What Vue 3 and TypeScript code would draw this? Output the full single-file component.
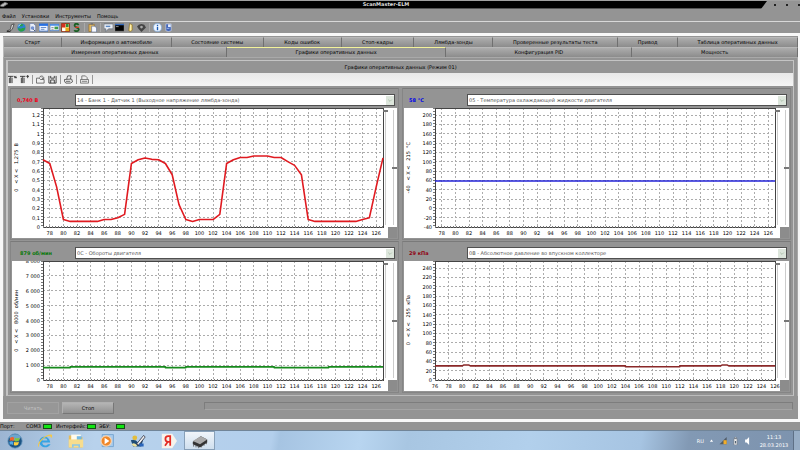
<script setup lang="ts">
import { ref } from 'vue'

interface Chart {
  id: string
  value: string
  tone: string
  pid: string
  range: string
  xMin: number
  xMax: number
  yMin: number
  yMax: number
  yTicks: number[]
  points: [number, number][]
  format: (v: number) => string
}

const ticks = (from: number, to: number, step: number): number[] => {
  const out: number[] = []
  for (let i = 0; from + i * step <= to + step / 1000; i++) out.push(from + i * step)
  return out
}

const plain = (v: number) => String(Math.round(v))

const charts: Chart[] = [
  {
    id: 'lambda', value: '0,740 В', tone: 'red', pid: '14 - Банк 1 - Датчик 1 (Выходное напряжение лямбда-зонда)',
    range: '0   < X <   1,275  В', xMin: 77, xMax: 127, yMin: 0, yMax: 1.275, yTicks: ticks(0, 1.2, 0.1),
    format: (v) => String(Math.round(v * 10) / 10).replace('.', ','),
    points: [
      [77, 0.72], [78, 0.68], [79, 0.43], [80, 0.08], [81, 0.06], [85, 0.06], [86, 0.08], [87, 0.08], [88, 0.1],
      [89, 0.135], [90, 0.68], [91, 0.72], [92, 0.74], [93, 0.725], [94, 0.72], [95, 0.68], [96, 0.56], [97, 0.24],
      [98, 0.08], [99, 0.06], [100, 0.08], [102, 0.08], [103, 0.135], [104, 0.68], [105, 0.72], [106, 0.745],
      [107, 0.745], [108, 0.76], [110, 0.76], [111, 0.745], [112, 0.745], [113, 0.7], [114, 0.66], [115, 0.56],
      [116, 0.08], [117, 0.06], [123, 0.06], [124, 0.08], [125, 0.1], [126, 0.43], [127, 0.74],
    ],
  },
  {
    id: 'coolant', value: '58 °C', tone: 'blue', pid: '05 - Температура охлаждающей жидкости двигателя',
    range: '-40   < X <   215  °C', xMin: 77, xMax: 127, yMin: -40, yMax: 215, yTicks: ticks(-40, 200, 20),
    format: plain, points: [[77, 58.5], [127, 58.5]],
  },
  {
    id: 'rpm', value: '879 об/мин', tone: 'green', pid: '0C - Обороты двигателя',
    range: '0   < X <   8000  об/мин', xMin: 77, xMax: 127, yMin: 0, yMax: 8000, yTicks: ticks(0, 8000, 1000),
    format: (v) => (v >= 1000 ? `${v / 1000} 000` : String(v)),
    points: [
      [77, 830], [81, 830], [81, 885], [95, 885], [95, 830], [98, 830], [98, 885], [111, 885], [111, 830],
      [119, 830], [119, 885], [127, 885],
    ],
  },
  {
    id: 'map', value: '29 кПа', tone: 'maroon', pid: '0B - Абсолютное давление во впускном коллекторе',
    range: '0   < X <   255  кПа', xMin: 76, xMax: 126, yMin: 0, yMax: 255, yTicks: ticks(0, 240, 20),
    format: plain,
    points: [
      [76, 30.3], [80, 30.3], [80.2, 32], [81, 32], [81.2, 30.3], [104, 30.3], [104, 28.5], [112, 28.5],
      [112, 30.3], [118, 30.3], [118.2, 32], [119, 32], [119.2, 30.3], [126, 30.3],
    ],
  },
]

const px = (c: Chart, v: number) => ((v - c.xMin) / (c.xMax - c.xMin)) * 100
const py = (c: Chart, v: number) => 100 - ((v - c.yMin) / (c.yMax - c.yMin)) * 100
const xTicks = (c: Chart) => ticks(c.xMin + (c.xMin % 2), 126, 2)
const line = (c: Chart) => c.points.map(([x, y]) => `${px(c, x)},${py(c, y)}`).join(' ')

const menus = ['Файл', 'Установки', 'Инструменты', 'Помощь']
const topTabs = [
  'Старт', 'Информация о автомобиле', 'Состояние системы', 'Коды ошибок', 'Стоп-кадры', 'Лямбда-зонды',
  'Проверенные результаты теста', 'Привод', 'Таблица оперативных данных',
]
const lowerTabs = ['Измерения оперативных данных', 'Графики оперативных данных', 'Конфигурация PID', 'Мощность']
const active = ref('Графики оперативных данных')
const leds = ['COM3', 'Интерфейс:', 'ЭБУ:']
</script>

<template>
  <div class="desktop">
    <header class="title">
      <svg class="title-icon" viewBox="0 0 9 8"><path d="M0 4.500 5 1.500 8.500 3 3 6.500 0 6z" fill="#bbb" stroke="#666" /></svg>
      <h1>ScanMaster-ELM</h1>
      <div class="corner">
        <button aria-label="Свернуть"></button><button aria-label="Развернуть"></button><button aria-label="Закрыть"></button>
      </div>
    </header>

    <nav class="menu"><button v-for="m in menus" :key="m">{{ m }}</button></nav>

    <div class="tools">
      <button aria-label="Подключить"><svg viewBox="0 0 10 10"><path d="M1 9l4-2 1-5 3-1-2 6-3 2z" fill="#ddd" stroke="#333" stroke-width=".8" /><path d="M1 9.300h4" stroke="#222" /></svg></button>
      <button aria-label="Связь"><svg viewBox="0 0 10 10"><circle cx="5" cy="5" r="4.500" fill="#2d83cd" /><path d="M1 6c2-1 3 1 4 0s2 0 4-1c0 3-2 4.500-4 4.500S1.500 8 1 6M3 1.500l4 0-1 2-3 0z" fill="#27a144" /><path d="M1.500 3.500 4 1.500" stroke="#d6f1ff" /></svg></button>
      <button aria-label="Отчёт"><svg viewBox="0 0 10 10"><path d="M2 .5h4l2.500 2.500v6.500H2z" fill="#e9eef8" stroke="#6276a8" stroke-width=".7" /><circle cx="5" cy="5.500" r="2" fill="#7492d2" /><path d="m6 7 2 2" stroke="#345" /></svg></button>
      <button aria-label="Окно"><svg viewBox="0 0 10 10"><path d="M0 1h10v8H0z" fill="#eef4ff" stroke="#2763c6" stroke-width=".8" /><path d="M0 1h10v2.200H0z" fill="#2670e4" /><path d="M2 5h6M2 7h4" stroke="#5d84c4" /></svg></button>
      <button aria-label="Панель"><svg viewBox="0 0 10 10"><path d="M0 1.500h10v7H0z" fill="#f2f7ff" stroke="#3c78c8" stroke-width=".8" /><path d="M0 1.500h10v1.500H0z" fill="#3d85e8" /><path d="M5 4h4v3H5z" fill="#3b9b4b" /><path d="M1.500 5h2.500M1.500 7h2.500" stroke="#777" stroke-width=".8" /></svg></button>
      <button aria-label="Сетка"><svg viewBox="0 0 10 10"><path d="M.5.5h9v9h-9z" fill="#fff6c0" stroke="#8d2510" /><path d="M1 1h4v4H1z" fill="#d63220" /><path d="M5 5h4v4H5z" fill="#e5a918" /><path d="M5.500 1h3v3.500h-3z" fill="#2d8e39" /><path d="M1.500 6h3v3h-3z" fill="#fff" /></svg></button>
      <button aria-label="Валюта"><svg viewBox="0 0 10 10"><path d="M7.500 2.200C5-.3 2.500 1 3 3.200S8 5 7.500 7.300 3.500 9.500 2.500 8" fill="none" stroke="#176022" stroke-width="2" /><path d="M3.500 4.800h4" stroke="#d43820" stroke-width="1.500" /></svg></button>
      <i></i>
      <button aria-label="Вставить"><svg viewBox="0 0 10 10"><path d="M1 1.500h6v8H1z" fill="#e0b760" stroke="#926a26" stroke-width=".7" /><path d="M3 0h2.500v2H3z" fill="#777" /><path d="M4 3.500h3.500l2 2V10H4z" fill="#f6f8ff" stroke="#5b6f96" stroke-width=".7" /></svg></button>
      <i></i>
      <button aria-label="Сообщение"><svg viewBox="0 0 10 10"><path d="M0 1h10v5.500H5L2 9.500v-3H0z" fill="#e8edf4" stroke="#5c6878" stroke-width=".7" /><path d="M2 3h5v1.500H2z" fill="#5b88c3" /></svg></button>
      <button aria-label="Терминал"><svg viewBox="0 0 10 10"><path d="M0 1h10v8H0z" fill="#000" stroke="#777" stroke-width=".5" /><path d="M0 1h10v1.500H0z" fill="#3269bb" /><path d="M1 4h3" stroke="#ddd" stroke-width=".7" /></svg></button>
      <button aria-label="Файл данных"><svg viewBox="0 0 10 10"><path d="M4 .5 7 2v6L5 9.500 3 8.500z" fill="#efd77d" stroke="#826b28" stroke-width=".7" /><path d="M5 2v6" stroke="#fff4b8" /></svg></button>
      <button aria-label="Настройка"><svg viewBox="0 0 10 10"><path d="M0 4 2 2l3-1 3 1 2 3-2 2-3 3-3-3z" fill="#454545" /><circle cx="5" cy="4.500" r="1.500" fill="#aaa" /></svg></button>
      <i></i>
      <button aria-label="Сведения"><svg viewBox="0 0 10 10"><circle cx="5" cy="5" r="4.500" fill="#eef6ff" stroke="#88add6" /><path d="M5 4.300V8M5 2v1.200" stroke="#1759b5" stroke-width="1.500" /></svg></button>
      <button aria-label="Выход"><svg viewBox="0 0 10 10"><path d="M2 1h6v7.500L5 9.500 2 8.500z" fill="#4366b8" stroke="#e1e9f8" stroke-width=".6" /><path d="M4.500 1.500h3v3h-3z" fill="#e9f0ff" /><path d="M3 6h3" stroke="#9eb8ee" /></svg></button>
    </div>

    <main class="window">
      <div class="tabs upper" role="tablist">
        <button v-for="t in topTabs" :key="t" role="tab" :aria-selected="active === t" :class="{ on: active === t }" @click="active = t">{{ t }}</button>
      </div>
      <div class="tabs lower" role="tablist">
        <button v-for="t in lowerTabs" :key="t" role="tab" :aria-selected="active === t" :class="{ on: active === t }" @click="active = t">{{ t }}</button>
      </div>

      <section class="page">
        <div class="frame">
          <h2>Графики оперативных данных (Режим 01)</h2>
          <div class="chart-tools">
            <button aria-label="Все графики"><svg viewBox="0 0 10 10"><path d="M0 1.500h6M3 1.500V9M1.500 3v6M4.500 3v6M7 1l1 2 1-2M7 3h3" fill="none" stroke="#333" stroke-width="1" /></svg></button>
            <button aria-label="Сбросить графики"><svg viewBox="0 0 10 10"><path d="M0 1.500h6M3 1.500V9M1.500 3v6M4.500 3v6M7 1.500h3M8.500 0v3.500" fill="none" stroke="#333" stroke-width="1" /></svg></button>
            <i></i>
            <button aria-label="Открыть"><svg viewBox="0 0 10 10"><path d="M.5 9V3.500h3L5 5h4v4zM4 3c0-2 3-2.500 4-1v2M6.500 3 8 4.500 9.500 3" fill="none" stroke="#555" stroke-width=".9" /></svg></button>
            <button aria-label="Сохранить"><svg viewBox="0 0 10 10"><path d="M1 1v8h8V1M3 9V5.500h4V9M3 1v2.500h4V1" fill="none" stroke="#444" stroke-width="1.100" /></svg></button>
            <i></i>
            <button aria-label="Печать"><svg viewBox="0 0 10 10"><path d="M3 4.500 4 1h4L7 4.500M.5 5l8-.5 1 3L7 9H2L.5 7zM2 7h5" fill="none" stroke="#444" stroke-width=".9" /></svg></button>
            <i></i>
            <button aria-label="Экспорт"><svg viewBox="0 0 10 10"><path d="M2 5V1h4l2 2v2M.5 5h9v4h-9zM2 7h6" fill="none" stroke="#666" stroke-width=".9" /></svg></button>
            <i></i>
          </div>

          <div class="charts">
            <section v-for="c in charts" :key="c.id" class="panel" :class="c.tone">
              <div class="head">
                <label :for="c.id">{{ c.value }}</label>
                <div class="combo">
                  <select :id="c.id" disabled><option>{{ c.pid }}</option></select>
                  <svg viewBox="0 0 9 9"><path d="m2.500 3.500 2 2 2-2" fill="none" stroke="#a9bda9" /></svg>
                </div>
              </div>
              <div class="chart">
                <span class="range">{{ c.range }}</span>
                <svg class="y-axis">
                  <text v-for="t in c.yTicks" :key="t" x="100%" :y="py(c, t) + '%'" dx="-3" dy="2" text-anchor="end">{{ c.format(t) }}</text>
                </svg>
                <svg class="plot">
                  <g class="grid">
                    <line v-for="t in xTicks(c)" :key="'x' + t" :x1="px(c, t) + '%'" :x2="px(c, t) + '%'" y1="0" y2="100%" />
                    <line v-for="t in c.yTicks" :key="'y' + t" x1="0" x2="100%" :y1="py(c, t) + '%'" :y2="py(c, t) + '%'" />
                  </g>
                  <rect class="edge" width="100%" height="100%" />
                  <line class="minor-y" x1="-1" x2="-1" y1="0" y2="100%" />
                  <line class="minor-x" x1="0" x2="100%" y1="100%" y2="100%" />
                  <svg viewBox="0 0 100 100" preserveAspectRatio="none" width="100%" height="100%">
                    <polyline class="trace" :points="line(c)" />
                  </svg>
                </svg>
                <svg class="x-axis">
                  <text v-for="t in xTicks(c)" :key="t" :x="px(c, t) + '%'" y="8" text-anchor="middle">{{ t }}</text>
                </svg>
                <input class="scale" type="range" min="0" max="100" value="0" aria-label="Масштаб" />
                <input class="shift" type="range" min="0" max="100" value="50" aria-label="Смещение" />
                <span class="notch"></span>
              </div>
            </section>
          </div>
        </div>
      </section>

      <div class="actions">
        <button disabled>Читать</button>
        <button>Стоп</button>
        <div class="progress" role="progressbar" aria-label="Ход чтения"></div>
      </div>
    </main>

    <footer class="status">
      <span>Порт:</span>
      <span v-for="l in leds" :key="l" class="led">{{ l }}<b></b></span>
    </footer>

    <div class="taskbar">
      <button aria-label="Пуск"><svg viewBox="0 0 20 20"><circle cx="10" cy="10" r="9" fill="#1c5484" stroke="#6d9bc2" /><ellipse cx="10" cy="5.500" rx="7" ry="4" fill="#6ea5cd" /><path d="M4 6q3-2 5 0l-.8 4q-2.500-1.500-5 0z" fill="#ee6430" /><path d="M10 6q3 1.500 6-.5l-.8 4q-3 2-6 .5z" fill="#83c541" /><path d="M3 11q2.500-1.500 5 0l-.6 4q-2.500-1.500-4-.3z" fill="#51aae8" /><path d="M9 11q3 1.500 6-.5l-1 4q-2.500 2-5.600.5z" fill="#ffd03c" /></svg></button>
      <button aria-label="Internet Explorer"><svg viewBox="0 0 20 20"><path d="M16.500 12H6.500c.5 5 6 4 7 2h3.500C14 20 3 19 3 11S15.500 2 16.500 12M6.500 9.500h6.500C12.500 5.500 7 5.500 6.500 9.500" fill="#37a3e3" fill-rule="evenodd" /><path d="M2 18C-2 13 10 2 17 2c3 0 2 3 .5 5C18 2 12 3 7 8c-4 4-5 8-5 10" fill="#f2c84a" /></svg></button>
      <button aria-label="Проводник"><svg viewBox="0 0 20 20"><path d="M1 3h7l1 2h9v13H1z" fill="#e6bd5c" /><path d="M4 2h12v8H4z" fill="#fffbed" /><path d="M11 4h6v5h-6z" fill="#73bae5" /><path d="M1 8h18v10H1z" fill="#f7dd8e" /><path d="M5 18v-4h10v4h-2v-2H7v2z" fill="#8dc7e7" /></svg></button>
      <button aria-label="Проигрыватель"><svg viewBox="0 0 20 20"><path d="M4 2h14v15H4z" fill="#a9cced" stroke="#6b9dcb" /><circle cx="9" cy="10" r="6.500" fill="#f08627" stroke="#f4d4b4" stroke-width="1.500" /><path d="m7 6 6 4-6 4z" fill="#fff" /></svg></button>
      <button aria-label="Ножницы"><svg viewBox="0 0 20 20"><path d="M1 9q6-2 9 3l8-9-4 14H4z" fill="#1d4c78" /><circle cx="6" cy="6" r="3" fill="#e2bd3d" /><path d="m8 14 9-11 2 2-8 10z" fill="#efefef" stroke="#334" /><path d="M2 14q4-3 7 2-3 3-7-2" fill="#ece2a1" /><path d="M11 13h6v4h-5z" fill="#2964ba" /></svg></button>
      <button aria-label="Яндекс"><svg viewBox="0 0 20 20"><path d="M1 1h13l6 9-6 9H1z" fill="#f7f3ec" /><path d="M11.500 16V4H9Q5.500 4 5.500 7.500T9 11h2.500M8.500 11 5 16" fill="none" stroke="#e32b24" stroke-width="2.200" /></svg></button>
      <button class="current" aria-label="ScanMaster"><svg viewBox="0 0 20 20"><path d="m1 11 10-7 8 4v4l-9 6-9-4z" fill="#333" /><path d="m1 10 10-6 8 4-9 6z" fill="#aaa" /><path d="m2 14v3M5 15v3M8 16v3M12 16v2M15 14v2M18 12v2" stroke="#555" /></svg></button>
      <div class="tray">
        <span>RU</span>
        <svg viewBox="0 0 10 10"><path d="m3 6 2-3 2 3z" fill="#fff" /></svg>
        <svg viewBox="0 0 10 10"><path d="M0 9 9 0v9z" fill="#525c66" /><path d="M5 4h4v5H5z" fill="#f2ad28" /></svg>
        <svg viewBox="0 0 10 10"><path d="M3 2h4v8H3zM4 0h2v2H4z" fill="#eee" stroke="#6a7380" stroke-width=".8" /><path d="M4.300 5h1.500v3H4.300z" fill="#536474" /></svg>
        <svg viewBox="0 0 10 10"><path d="M2 3h2l3-3v10L4 7H2z" fill="#fff" /></svg>
        <time class="clock" datetime="2013-03-28T11:13"><span>11:13</span><span>28.03.2013</span></time>
        <button class="peek" aria-label="Показать рабочий стол"></button>
      </div>
    </div>
  </div>
</template>

<style>
body { margin: 0; }
</style>

<style scoped>
* { box-sizing: border-box; }
svg { display: block; }
button {
  margin: 0;
  padding: 0;
  border: 0;
  background: none;
  color: inherit;
  font: inherit;
}
.desktop {
  display: flex;
  flex-direction: column;
  height: 100vh;
  min-height: 400px;
  overflow: hidden;
  background: #949494;
  color: #000;
  font: 5px/8px "DejaVu Sans", sans-serif;
}
.title {
  display: flex;
  justify-content: center;
  position: relative;
  height: 9px;
  flex: none;
  padding-right: 28px;
  border-top: 1px solid #a0a0a0;
  border-bottom: 1px solid #555;
  background: #000;
  color: #ddd;
}
.title h1 { margin: 0; font-size: 5px; line-height: 7px; }
.title-icon { position: absolute; left: 0; top: 0; width: 9px; height: 7px; }
.corner {
  position: absolute;
  top: 0;
  right: 0;
  display: flex;
  justify-content: flex-end;
  align-items: center;
  gap: 10px;
  width: 39px;
  height: 8px;
  background: #949494;
  clip-path: polygon(6px 0, 100% 0, 100% 100%, 0 100%);
}
.corner button { width: 2px; height: 2px; background: #222; }
.menu {
  display: flex;
  gap: 6px;
  flex: none;
  height: 13px;
  padding: 3px 2px 0;
  border-bottom: 1px solid #d8d8d8;
}
.menu button { height: 8px; }
.tools {
  display: flex;
  align-items: center;
  gap: 2px;
  flex: none;
  height: 11px;
  padding-left: 6px;
}
.tools svg { width: 9px; height: 9px; }
.tools i { width: 1px; height: 9px; margin: 0 1px; background: #aaa; }
.window {
  display: flex;
  flex-direction: column;
  flex: 1;
  min-height: 0;
  border: 3px solid #f8f8f8;
  border-right-width: 2px;
  padding-top: 1px;
}
.tabs { display: grid; flex: none; height: 10px; border-left: 1px solid #bbb; }
.upper { grid-template-columns: 58fr 110fr 92fr 78fr 73fr 79fr 125fr 60fr 120fr; }
.lower { grid-template-columns: 223fr 220fr 186fr 166fr; }
.tabs button {
  min-width: 0;
  border-top: 1px solid #b8b8b8;
  border-right: 1px solid #707070;
  background: linear-gradient(#adadad, #8c8c8c);
  line-height: 9px;
  white-space: nowrap;
}
.tabs button.on { border-top-color: #f2f29a; background: #999; }
.page {
  display: flex;
  flex: 1;
  min-height: 0;
  padding: 2px 3px 0 2px;
  border: 1px solid #a9a9a9;
  border-bottom: 0;
}
.frame {
  display: flex;
  flex-direction: column;
  flex: 1;
  min-width: 0;
  border: 1px solid #c4c4c4;
  border-left-width: 2px;
  border-bottom-color: #bbb;
}
.frame h2 {
  flex: none;
  height: 12px;
  margin: 0;
  font-size: 5px;
  font-weight: 400;
  line-height: 12px;
  text-align: center;
}
.chart-tools {
  display: flex;
  align-items: center;
  gap: 3px;
  flex: none;
  height: 13px;
  background: linear-gradient(#e8e8e8, #f5f5f5);
}
.chart-tools svg { width: 9px; height: 9px; }
.chart-tools i { width: 1px; height: 9px; background: #999; }
.charts {
  display: grid;
  grid-template-columns: repeat(2, minmax(0, 1fr));
  grid-template-rows: repeat(2, minmax(0, 1fr));
  gap: 1px 3px;
  flex: 1;
  min-height: 0;
  padding: 2px;
}
.panel {
  display: flex;
  flex-direction: column;
  gap: 2px;
  min-height: 0;
  padding: 5px 1px 1px;
  border: 1px solid #858585;
  border-top-color: #7a7a7a;
}
.red { --trace: #e01a20; --label: #f00018; }
.blue { --trace: #2424d8; --label: #0000e8; }
.green { --trace: #168a1c; --label: #087808; }
.maroon { --trace: #8a2828; --label: #900010; }
.head { display: grid; grid-template-columns: 63px 1fr; flex: none; height: 12px; padding-right: 2px; }
.head label { padding-left: 5px; color: var(--label); font-weight: 700; line-height: 12px; white-space: nowrap; }
.green label { padding-left: 8px; }
.combo {
  display: flex;
  align-items: center;
  border: 1px solid #505050;
  background: #fff;
}
.combo select {
  flex: 1;
  min-width: 0;
  height: 10px;
  margin: 0;
  padding: 0 1px;
  border: 0;
  border-radius: 0;
  appearance: none;
  background: none;
  color: #555;
  font: inherit;
  line-height: 10px;
  opacity: 1;
}
.combo svg { width: 8px; height: 9px; flex: none; background: #dde6dc; }
.chart {
  display: grid;
  grid-template-columns: 8px 23px minmax(0, 1fr) 5px 9px;
  grid-template-rows: minmax(0, 1fr) 11px;
  flex: 1;
  min-height: 0;
  overflow: hidden;
  background: #fff;
}
.range {
  grid-area: 1 / 1;
  align-self: center;
  justify-self: center;
  line-height: 8px;
  white-space: pre;
  writing-mode: vertical-rl;
  rotate: 180deg;
}
.chart svg { width: 100%; height: 100%; min-height: 0; overflow: visible; }
.y-axis { grid-area: 1 / 2; }
.plot { grid-area: 1 / 3; }
.x-axis { grid-area: 2 / 3; }
.chart text { fill: #000; }
.grid { stroke: #acacac; stroke-width: 1px; stroke-dasharray: 2 2; shape-rendering: crispEdges; }
.edge { fill: none; stroke: #444; stroke-width: 1px; shape-rendering: crispEdges; }
.minor-y, .minor-x { stroke: #777; stroke-width: 2px; stroke-dasharray: 1 2; }
.trace { fill: none; stroke: var(--trace); stroke-width: 1.6px; stroke-linejoin: round; vector-effect: non-scaling-stroke; }
.scale, .shift {
  width: 100%;
  height: calc(100% - 4px);
  min-height: 0;
  margin: 2px 0;
  appearance: none;
  background: linear-gradient(#ccc, #ccc) center / 1px 100% no-repeat;
  writing-mode: vertical-lr;
}
.scale { grid-area: 1 / 4; }
.shift { grid-area: 1 / 5; background-position: 5px 0; }
.scale::-webkit-slider-thumb, .shift::-webkit-slider-thumb {
  appearance: none;
  width: 5px;
  height: 2px;
  background: #777;
}
.shift::-webkit-slider-thumb { margin-left: 4px; }
.notch { grid-area: 2 / 5; background: #8c8c8c; }
.actions {
  display: grid;
  grid-template-columns: 52px 52px 1fr;
  column-gap: 3px;
  flex: none;
  height: 23px;
  padding: 6px 5px 5px 4px;
}
.actions button {
  border: 1px solid #b0b0b0;
  border-right-color: #777;
  border-bottom-color: #777;
  background: linear-gradient(#b5b5b5, #929292);
  line-height: 8px;
}
.actions button:disabled { border-color: #a2a2a2; background: #979797; color: #c4c4c4; }
.progress { height: 8px; margin-left: 87px; border: 1px solid #7d7d7d; border-bottom-color: #a4a4a4; }
.status {
  display: grid;
  grid-template-columns: 22px 26px 39px 26px;
  column-gap: 4px;
  align-items: center;
  flex: none;
  height: 8px;
}
.led { display: flex; align-items: center; justify-content: space-between; white-space: nowrap; }
.led b { flex: none; width: 9px; height: 5px; border: 1px solid #164c16; background: #12e512; }
.taskbar {
  display: flex;
  align-items: center;
  flex: none;
  height: 20px;
  background: linear-gradient(100deg, #9cb5d2, #b8d2ec 12%, #b3cfec 34%, #a6c4e2 35%, #b8d5f0 45%, #a8c6e2 51%, #b2d0ec 66%, #a6c4e2 80%, #8299b4 86%, #7d93ae);
  border-top: 1px solid #718598;
}
.taskbar > button { display: grid; place-items: center; width: 31px; height: 19px; }
.taskbar > button > svg { width: 16px; height: 16px; }
.taskbar > button:first-child { width: 29px; }
.taskbar > .current { border: 1px solid #88a0b8; background: linear-gradient(#f0f5fa, #cfdfee); }
.tray { display: flex; align-items: center; margin-left: auto; color: #fff; }
.tray > svg { width: 9px; height: 8px; margin-left: 3px; }
.clock { display: grid; width: 38px; margin-left: 3px; text-align: center; }
.peek { width: 7px; height: 19px; border-left: 1px solid #5e7086; background: #98aec6; }
</style>
